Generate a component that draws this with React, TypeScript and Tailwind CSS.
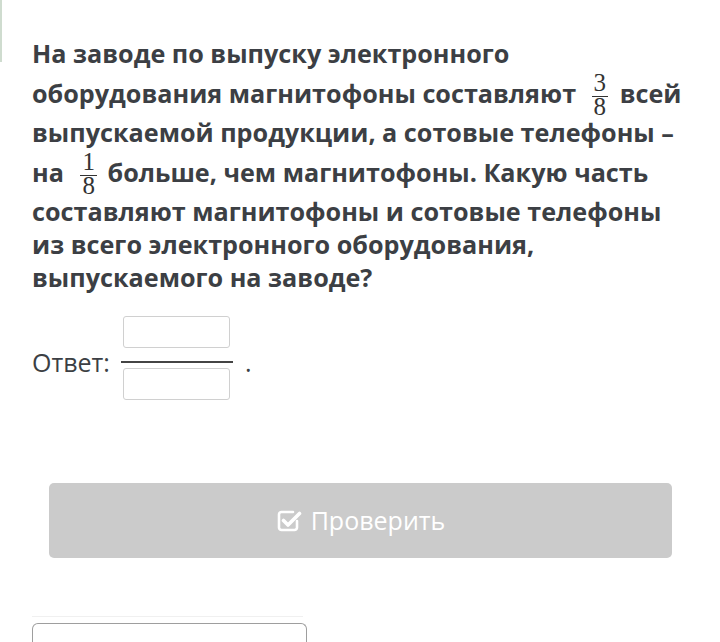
import React from 'react';

function Frac({ n, d, className = '' }: { n: string; d: string; className?: string }) {
  return (
    <span
      className={`inline-block align-[-12px] text-center font-normal text-[#333] ${className}`}
      style={{ fontFamily: '"Liberation Serif", serif' }}
    >
      <span className="block px-[2px] text-[25px] leading-[26px]">{n}</span>
      <span className="block border-t border-[#333] px-[2px] text-[25px] leading-[19px]">{d}</span>
    </span>
  );
}

function CheckSquare() {
  return (
    <svg width="26" height="24" viewBox="0 0 26 24" fill="none" className="shrink-0">
      <path
        d="M17 3H5.5A2.5 2.5 0 0 0 3 5.5v13A2.5 2.5 0 0 0 5.5 21h13a2.5 2.5 0 0 0 2.5-2.5V12"
        stroke="white"
        strokeWidth="2.6"
        strokeLinecap="round"
      />
      <path d="M7.5 11.5l4.5 4.5L23.5 4.5" stroke="white" strokeWidth="3.6" strokeLinecap="round" strokeLinejoin="round" />
    </svg>
  );
}

export default function App() {
  return (
    <div className="flex w-[720px] h-[642px] overflow-hidden bg-white items-start" style={{ fontFamily: '"Open Sans", sans-serif' }}>
      <div className="w-[2px] h-[62px] shrink-0 bg-[#cfdccf]" />
      <div className="flex-1 pl-[30px] pr-[20px] pt-[37px]">
        <p className="text-[25.2px] leading-[33px] font-bold text-[#3c3f44]">
          На заводе по выпуску электронного
          <br />
          оборудования магнитофоны составляют <Frac n="3" d="8" className="ml-[9px] mr-[5px]" /> всей
          <br />
          выпускаемой продукции, а сотовые телефоны –
          <br />
          на <Frac n="1" d="8" className="ml-[10px] mr-[4px]" /> больше, чем магнитофоны. Какую часть
          <br />
          составляют магнитофоны и сотовые телефоны
          <br />
          из всего электронного оборудования,
          <br />
          выпускаемого на заводе?
        </p>

        <div className="mt-[22px] flex items-center text-[25px] leading-[33px] text-[#3c3f44]">
          <span className="mt-[8px]">Ответ:</span>
          <div className="ml-[11px] flex flex-col items-center w-[112px]">
            <div className="w-[107px] h-[32px] rounded-[3px] border border-[#d0d0d0] bg-white" />
            <div className="mt-[13px] w-full h-[2px] bg-[#444]" />
            <div className="mt-[5px] w-[107px] h-[32px] rounded-[3px] border border-[#d0d0d0] bg-white" />
          </div>
          <span className="mt-[8px] ml-[12px]">.</span>
        </div>

        <div className="mt-[83px] ml-[17px] mr-[28px] h-[75px] rounded-[5px] bg-[#cbcbcb] flex items-center justify-center gap-[9px] text-white text-[25px]">
          <CheckSquare />
          <span>Проверить</span>
        </div>

        <div className="mt-[58px] w-[271px] border-t border-[#f0f0f0]" />
        <div className="mt-[6px] w-[275px] h-[40px] rounded-t-[6px] border border-b-0 border-[#9e9e9e]" />
      </div>
    </div>
  );
}
